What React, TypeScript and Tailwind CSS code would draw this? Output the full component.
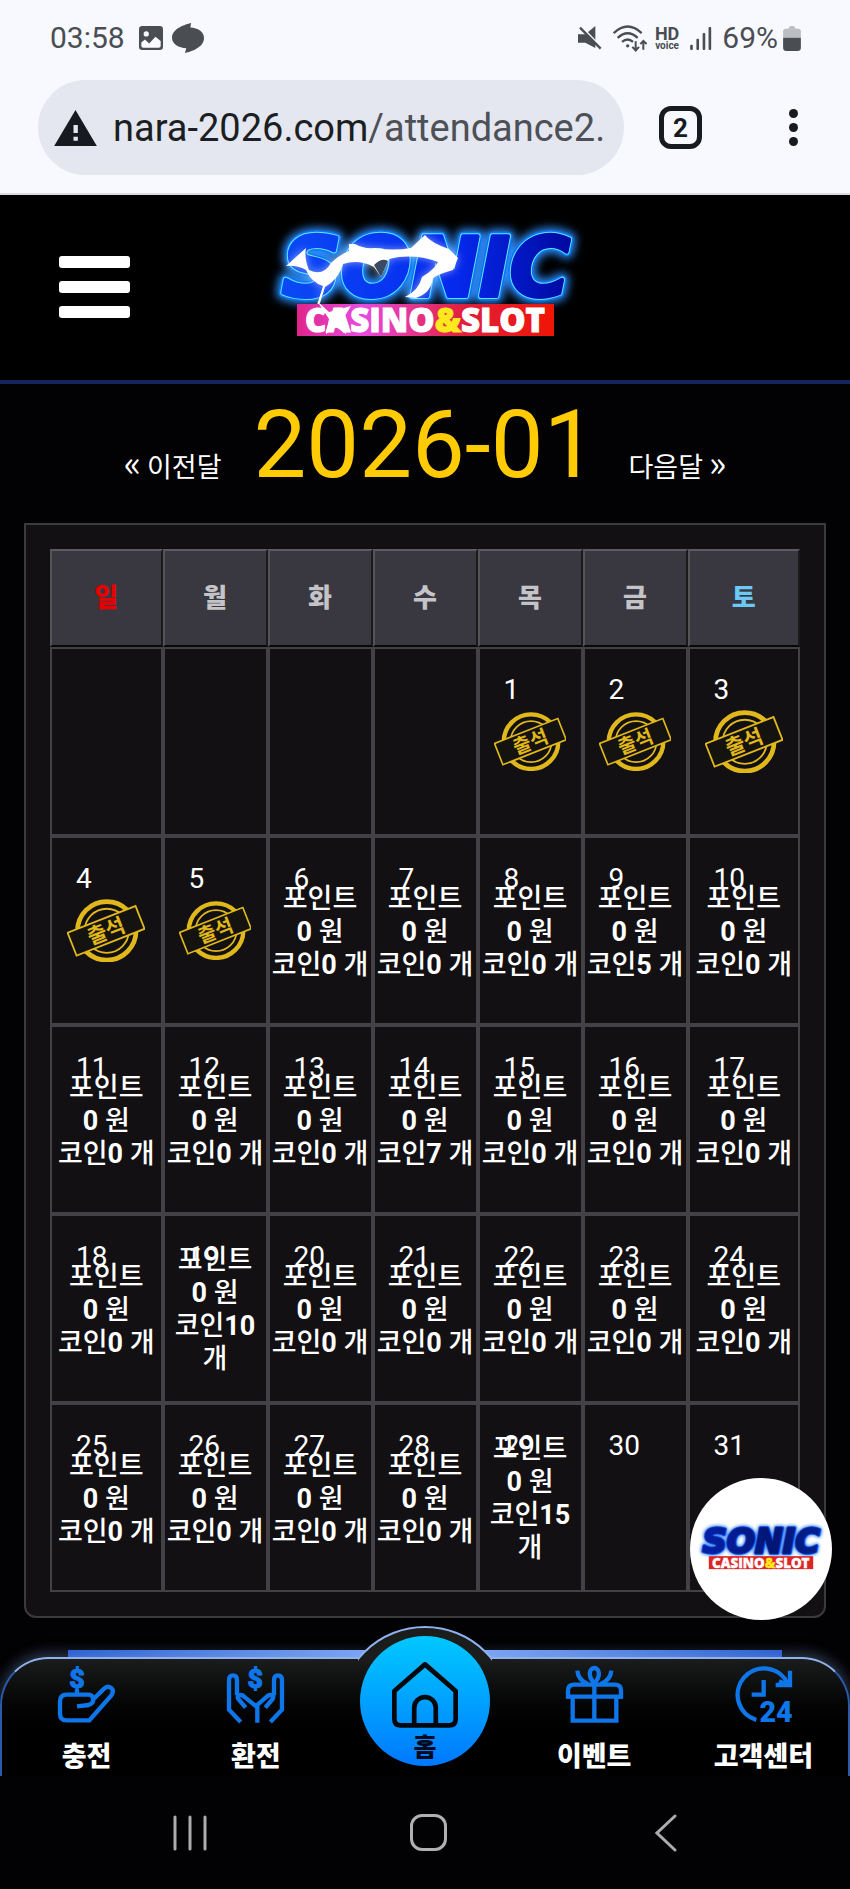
import { useId } from 'react';
import type { ReactNode } from 'react';
import clsx from 'clsx';

type DayEntry = {
  day: number;
  stamped?: boolean;
  point?: number;
  coin?: number;
};

const weekdays = [
  { label: '일', color: 'text-[#e60000]' },
  { label: '월', color: 'text-[#c4c4c8]' },
  { label: '화', color: 'text-[#c4c4c8]' },
  { label: '수', color: 'text-[#c4c4c8]' },
  { label: '목', color: 'text-[#c4c4c8]' },
  { label: '금', color: 'text-[#c4c4c8]' },
  { label: '토', color: 'text-[#6cc8f5]' },
];

const FIRST_WEEKDAY = 4;
const STAMPED_UNTIL = 5;
const LAST_REWARD_DAY = 29;
const coinByDay: Record<number, number> = { 9: 5, 14: 7, 19: 10, 29: 15 };

function buildWeeks() {
  const cells: (DayEntry | null)[] = Array(FIRST_WEEKDAY).fill(null);
  for (let day = 1; day <= 31; day++) {
    if (day <= STAMPED_UNTIL) cells.push({ day, stamped: true });
    else if (day <= LAST_REWARD_DAY) cells.push({ day, point: 0, coin: coinByDay[day] ?? 0 });
    else cells.push({ day });
  }
  const weeks: (DayEntry | null)[][] = [];
  for (let i = 0; i < cells.length; i += 7) weeks.push(cells.slice(i, i + 7));
  return weeks;
}

function StatusBar() {
  return (
    <div className="flex h-[76px] items-center justify-between pl-[50px] pr-[49px] text-[#4a4d52]">
      <div className="flex items-center">
        <span className="text-[30px] leading-9">03:58</span>
        <svg viewBox="0 0 73 73" className="ml-[14px] h-6 w-6">
          <rect width="73" height="73" rx="10" fill="currentColor" />
          <circle cx="22" cy="24" r="8" fill="#f7f9fe" />
          <path d="M7 50 L18 41 L31 53 L50 33 L66 46 V60 Q66 66 60 66 H13 Q7 66 7 60Z" fill="#f7f9fe" />
        </svg>
        <svg viewBox="0 0 94 88" className="ml-[9px] h-[30px] w-8">
          <path d="M56 0 C40 4 0 16 0 43 C0 61 20 73 42 74 L38 88 C56 84 94 72 94 44 C94 25 76 14 54 13Z" fill="currentColor" />
        </svg>
      </div>
      <div className="flex items-center">
        <svg viewBox="0 0 72 72" className="h-6 w-6" fill="currentColor">
          <path d="M0 25 H22 L52 0 V66 L22 50 H0Z" />
          <path d="M4 -2 L74 70" stroke="#f7f9fe" strokeWidth="9" />
          <path d="M6 5 L68 68" stroke="currentColor" strokeWidth="7" />
        </svg>
        <svg viewBox="0 0 102 80" className="ml-[11px] h-[27px] w-[34px]" fill="none" stroke="currentColor" strokeWidth="7">
          <path d="M2 24 Q44 -16 86 24" />
          <path d="M14 38 Q44 10 74 38" />
          <path d="M27 50 Q44 36 60 50" />
          <circle cx="44" cy="62" r="5" fill="currentColor" stroke="none" />
          <path d="M68 48 V74 M58 65 L68 76 L78 65" strokeWidth="6" />
          <path d="M91 74 V48 M82 57 L91 47 L101 57" strokeWidth="6" />
        </svg>
        <span className="ml-2 flex flex-col items-center font-bold">
          <span className="text-[18px] leading-[14px]">HD</span>
          <span className="text-[10px] leading-[9px]">voice</span>
        </span>
        <svg viewBox="0 0 66 70" className="ml-[11px] h-[23px] w-[22px]" fill="currentColor">
          <rect x="0" y="54" width="8" height="16" rx="3" />
          <rect x="19" y="36" width="8" height="34" rx="3" />
          <rect x="38" y="18" width="8" height="52" rx="3" />
          <rect x="56" y="0" width="8" height="70" rx="3" />
        </svg>
        <span className="ml-[10px] text-[30px] leading-9">69%</span>
        <svg viewBox="0 0 54 76" className="ml-[5px] h-[25px] w-[18px]">
          <path d="M0 36 V16 Q0 8 8 8 H16 Q18 0 24 0 H30 Q36 0 38 8 H46 Q54 8 54 16 V36Z" fill="#bcbec3" />
          <path d="M0 36 H54 V66 Q54 76 44 76 H10 Q0 76 0 66Z" fill="currentColor" />
        </svg>
      </div>
    </div>
  );
}

function BrowserBar() {
  return (
    <div className="flex items-center pb-[18px] pl-[38px] pr-[46px] pt-1">
      <button type="button" aria-label="주소창" className="flex h-[95px] min-w-0 flex-1 items-center rounded-full bg-[#e4e7ef] px-4">
        <svg viewBox="0 0 128 108" className="h-9 w-[43px] shrink-0">
          <path d="M64 0 L128 108 H0Z" fill="#171b20" />
          <path d="M58 45 h13 v24 h-13Z M58 80 h13 v12 h-13Z" fill="#e4e7ef" />
        </svg>
        <span className="ml-4 min-w-0 overflow-hidden whitespace-nowrap text-left text-[38px] leading-[52px] text-[#1b1e23]">
          nara-2026.com<span className="text-[#4d5056]">/attendance2.</span>
        </span>
      </button>
      <button type="button" aria-label="탭 2개" className="ml-[35px] flex h-[43px] w-[43px] items-center justify-center rounded-xl border-[5px] border-[#171b20] text-[26px] leading-8 font-bold text-[#171b20]">
        2
      </button>
      <button type="button" aria-label="메뉴" className="ml-20 flex w-[22px] flex-col items-center gap-[5px]">
        <span className="h-[9px] w-[9px] rounded-full bg-[#171b20]" />
        <span className="h-[9px] w-[9px] rounded-full bg-[#171b20]" />
        <span className="h-[9px] w-[9px] rounded-full bg-[#171b20]" />
      </button>
    </div>
  );
}

const BOLT =
  'M23 51 L43 33 Q41 43 46 55 Q60 62 68 48 Q76 40 86 36 L86 29 L92 29 Q100 34 112 33 Q130 36 148 33 L162 20 Q168 28 186 34 L195 43 L190 55 Q178 58 170 63 Q168 78 153 83 L142 82 Q156 75 159 62 Q172 54 175 47 Q150 38 126 44 L118 62 L111 52 Q96 44 80 49 Q76 64 62 72 L57 88 L54 90 L60 71 Q48 67 43 55 Q34 50 23 51Z';

function SonicLogo({ className, lightning }: { className?: string; lightning?: boolean }) {
  const id = useId();
  return (
    <svg viewBox="0 0 325 144" className={className} role="img" aria-label="SONIC CASINO&SLOT">
      <defs>
        <filter id={`${id}glow`} x="-20%" y="-40%" width="140%" height="180%">
          <feGaussianBlur stdDeviation="4" />
        </filter>
        <linearGradient id={`${id}blue`} x1="0" x2="1">
          <stop offset="0" stopColor={lightning ? '#0b49f5' : '#0420a8'} />
          <stop offset="0.6" stopColor={lightning ? '#0529ee' : '#031574'} />
          <stop offset="1" stopColor={lightning ? '#0009a0' : '#04218f'} />
        </linearGradient>
        <linearGradient id={`${id}red`} x1="0" x2="1">
          <stop offset="0" stopColor={lightning ? '#e0258c' : '#dc2626'} />
          <stop offset="0.25" stopColor={lightning ? '#e84be0' : '#dc2626'} />
          <stop offset="0.65" stopColor={lightning ? '#e01f3c' : '#dc2626'} />
          <stop offset="1" stopColor={lightning ? '#f01505' : '#dc2626'} />
        </linearGradient>
      </defs>
      <g fontFamily="DejaVu Sans, sans-serif" fontWeight="700" fontStyle="italic" fontSize="82" textAnchor="middle" strokeLinejoin="round">
        <text x="163" y="81" fill="#0d6ff0" stroke={lightning ? '#2a86f5' : '#4c92f5'} strokeWidth="14" filter={`url(#${id}glow)`}>SONIC</text>
        <text x="163" y="81" fill="#0b78f0" stroke={lightning ? '#0b78f0' : '#1858e8'} strokeWidth="9">SONIC</text>
        <text x="163" y="81" fill="#0b78f0" stroke={lightning ? '#5fe4ff' : '#0a3fd8'} strokeWidth="6">SONIC</text>
        <text x="163" y="81" fill={`url(#${id}blue)`} stroke={`url(#${id}blue)`} strokeWidth="4">SONIC</text>
      </g>
      {lightning && (
        <g fill="#fff">
          <path d={BOLT} opacity="0.5" filter={`url(#${id}glow)`} />
          <path d={BOLT} />
          <path d="M111 50 Q119 42 125 46 L118 62Z" fill="#3a4a62" />
        </g>
      )}
      <rect x="34" y="89" width="257" height="32" fill={`url(#${id}red)`} />
      <text x="162" y="117" textAnchor="middle" fontFamily="Open Sans, sans-serif" fontWeight="800" fontSize="33" fill="#fff" stroke="#fff" strokeWidth="1">
        CASINO<tspan fill="#ffe81c" stroke="#ffe81c">&amp;</tspan>SLOT
      </text>
      {lightning && <path d="M54 86 L66 97 L74 95 L88 91 L80 104 L83 119 L73 112 L63 119 L66 104Z" fill="#fff" />}
    </svg>
  );
}

function SiteHeader() {
  return (
    <header className="grid grid-cols-[1fr_auto_1fr] items-center border-b-4 border-[#14265c] bg-black pb-[21px] pt-5">
      <button type="button" aria-label="전체 메뉴" className="ml-[59px] flex w-[71px] flex-col gap-[13px]">
        <span className="h-3 w-full rounded-[3px] bg-white" />
        <span className="h-3 w-full rounded-[3px] bg-white" />
        <span className="h-3 w-full rounded-[3px] bg-white" />
      </button>
      <a href="#home">
        <SonicLogo lightning className="h-[144px] w-[325px]" />
      </a>
    </header>
  );
}

function Stamp() {
  return (
    <svg viewBox="0 0 216 176" className="mx-auto w-[72%]" role="img" aria-label="출석">
      <g fill="none" stroke="#e0b81c">
        <circle cx="110" cy="88" r="81" strokeWidth="13" />
        <circle cx="110" cy="88" r="61" strokeWidth="5" />
      </g>
      <g transform="rotate(-21.5 108 88)">
        <rect x="7" y="54" width="202" height="68" fill="#15130f" stroke="#e0b81c" strokeWidth="5" />
        <text x="108" y="109" textAnchor="middle" fontFamily="Noto Sans CJK KR, sans-serif" fontWeight="700" fontSize="58" fill="#e0b81c">
          출석
        </text>
      </g>
    </svg>
  );
}

function DayCell({ entry }: { entry: DayEntry | null }) {
  return (
    <td className="relative h-[189px] border-2 border-[#434145] p-0 text-center align-middle text-[28px] leading-[33px]">
      {entry && <span className="absolute left-6 top-6">{entry.day}</span>}
      {entry?.stamped && <Stamp />}
      {entry?.coin !== undefined && (
        <div className="pt-[3px] text-[27px] leading-[33px] font-medium break-keep">
          포인트
          <br />
          <b>{entry.point}</b> 원
          <br />
          코인<b>{entry.coin}</b> 개
        </div>
      )}
    </td>
  );
}

function Calendar() {
  return (
    <section className="relative mx-6 rounded-b-xl border-2 border-[#3b3a3d] bg-[#121013] p-6">
      <table className="w-full table-fixed border-separate border-spacing-0">
        <colgroup>
          <col className="w-[15%]" />
          <col span={5} />
          <col className="w-[15%]" />
        </colgroup>
        <thead>
          <tr>
            {weekdays.map((weekday) => (
              <th
                key={weekday.label}
                scope="col"
                className={clsx(
                  'h-[98px] border-2 border-b-[#08070a] border-l-[#535358] border-r-[#1a191e] border-t-[#5c5c60] bg-[#393840] p-0 text-[26px] leading-8 font-black',
                  weekday.color,
                )}
              >
                {weekday.label}
              </th>
            ))}
          </tr>
        </thead>
        <tbody>
          {buildWeeks().map((week, index) => (
            <tr key={index}>
              {week.map((entry, column) => (
                <DayCell key={column} entry={entry} />
              ))}
            </tr>
          ))}
        </tbody>
      </table>
      <a href="#chat" className="absolute -bottom-1 -right-2 flex h-[142px] w-[142px] items-center justify-center rounded-full bg-white">
        <SonicLogo className="w-[132px]" />
      </a>
    </section>
  );
}

function NavIcon({ children }: { children: ReactNode }) {
  return (
    <svg viewBox="0 0 171 171" className="h-[57px] w-[57px] overflow-visible" fill="none" stroke="#0f76ea" strokeWidth="13">
      {children}
    </svg>
  );
}

function Dollar({ x }: { x: number }) {
  return (
    <text x={x} y="67" textAnchor="middle" fontFamily="Roboto, sans-serif" fontWeight="900" fontSize="80" fill="#0f76ea" stroke="#0f76ea" strokeWidth="3">
      $
    </text>
  );
}

const navItems = [
  {
    label: '충전',
    href: '#deposit',
    icon: (
      <NavIcon>
        <Dollar x={57} />
        <path d="M57 70 V86" />
        <path d="M57 121 L92 117 Q106 113 106 100 Q104 86 92 86 H26 Q6 86 6 106 V143 Q6 163 26 163 H94 L160 88 Q169 74 160 66 Q148 58 138 68 L106 100" />
      </NavIcon>
    ),
  },
  {
    label: '환전',
    href: '#withdraw',
    icon: (
      <NavIcon>
        <Dollar x={85} />
        <path d="M41 168 L6 131 V42 Q6 28 18 28 Q30 28 30 42 V88 M56 125 L34 99 Q30 92 36 88 Q46 84 54 94 L91 124" />
        <path d="M130 168 L165 131 V42 Q165 28 153 28 Q141 28 141 42 V88 M115 125 L137 99 Q141 92 135 88 Q125 84 117 94 L91 117 V170" />
      </NavIcon>
    ),
  },
  { label: '홈', href: '#home', icon: null },
  {
    label: '이벤트',
    href: '#event',
    icon: (
      <NavIcon>
        <path d="M6 98 V74 Q6 56 24 56 H147 Q165 56 165 74 V98" />
        <path d="M2 92 H169 M20 92 V164 H151 V92 M85 50 V164" />
        <path d="M85 52 C64 30 70 6 85 6 C100 6 106 30 85 52Z" />
        <path d="M34 14 Q36 42 66 54 M136 14 Q134 42 104 54" />
      </NavIcon>
    ),
  },
  {
    label: '고객센터',
    href: '#support',
    icon: (
      <NavIcon>
        <path d="M64 162 A79 79 0 1 1 158 52" />
        <path d="M165 14 V57 H122 M132 46 L160 57" />
        <path d="M86 42 V86 H50" />
        <text x="123" y="169" textAnchor="middle" fontFamily="Roboto, sans-serif" fontWeight="900" fontSize="86" fill="#0f76ea" stroke="none">
          24
        </text>
      </NavIcon>
    ),
  },
];

function BottomNav() {
  return (
    <nav className="relative pt-[39px]">
      <div className="absolute inset-x-[8%] top-8 h-2 bg-linear-to-r from-[#2458cf] via-[#8db4ff] to-[#2458cf]" />
      <div className="relative rounded-t-[48px] border-x-2 border-t-2 border-[#8fb1ee] border-x-[#2b5ba8] bg-linear-to-b from-[#1b1c1c] to-black to-80% shadow-[0_-4px_14px_rgba(130,165,220,0.35)]">
        {/* raised arc behind the home button */}
        <div className="absolute -top-[33px] left-1/2 h-9 w-[134px] -translate-x-1/2 overflow-hidden">
          <div className="-ml-5 h-[174px] w-[174px] rounded-full border-2 border-[#8fb1ee] bg-[#1b1c1c]" />
        </div>
        <ul className="relative grid h-[117px] grid-cols-5 text-[27px] leading-8 font-black text-white">
          {navItems.map((item) => (
            <li key={item.label} className="flex justify-center">
              {item.icon ? (
                <a href={item.href} className="flex flex-col items-center pt-[7px]">
                  {item.icon}
                  <span className="mt-[18px] whitespace-nowrap">{item.label}</span>
                </a>
              ) : (
                <a href={item.href} className="-mt-[23px] flex h-[130px] w-[130px] shrink-0 flex-col items-center rounded-full bg-linear-to-b from-[#00c8ff] to-[#0078ff] pt-[26px] text-[25px] leading-8 text-[#020a20]">
                  <svg viewBox="0 0 196 196" className="h-[66px] w-[66px]" fill="none" stroke="#04070c" strokeWidth="14" strokeLinejoin="round">
                    <path d="M7 86 L98 7 L189 86 V169 Q189 188 170 188 H26 Q7 188 7 169Z" />
                    <path d="M66 188 V136 A32 32 0 0 1 130 136 V188" />
                  </svg>
                  <span className="mt-1">{item.label}</span>
                </a>
              )}
            </li>
          ))}
        </ul>
      </div>
    </nav>
  );
}

function SystemNav() {
  return (
    <div className="relative grid h-[113px] grid-cols-3 place-items-center bg-[#020103] pl-[71px] pr-[65px]">
      <button type="button" aria-label="최근 앱">
        <svg viewBox="0 0 34 36" className="h-9 w-[34px]" stroke="#acacac" strokeWidth="3" strokeLinecap="round">
          <path d="M2 2 V34 M17 2 V34 M32 2 V34" />
        </svg>
      </button>
      <button type="button" aria-label="홈 화면" className="h-[37px] w-[37px] rounded-xl border-[3px] border-[#b0b0b0]" />
      <button type="button" aria-label="뒤로">
        <svg viewBox="0 0 22 38" className="h-[38px] w-[22px]" fill="none" stroke="#acacac" strokeWidth="3" strokeLinecap="round">
          <path d="M20 2 L2 19 L20 36" />
        </svg>
      </button>
    </div>
  );
}

export default function App() {
  return (
    <div className="bg-[#020103] font-[Roboto,'Noto_Sans_CJK_KR',sans-serif] text-white">
      <div className="border-b-2 border-[#d9dbe0] bg-[#f7f9fe]">
        <StatusBar />
        <BrowserBar />
      </div>
      <SiteHeader />
      <main>
        <div className="flex items-baseline justify-center gap-8 pb-5 pt-[3px] text-[27px] leading-8 whitespace-nowrap">
          <a href="#prev" className="font-['Noto_Sans_CJK_KR',sans-serif]">
            <span className="text-[36px]">«</span> 이전달
          </a>
          <h1 className="text-[94px] leading-[116px] text-[#ffcb05]">2026-01</h1>
          <a href="#next" className="font-['Noto_Sans_CJK_KR',sans-serif]">
            다음달 <span className="text-[36px]">»</span>
          </a>
        </div>
        <Calendar />
      </main>
      <BottomNav />
      <SystemNav />
    </div>
  );
}
